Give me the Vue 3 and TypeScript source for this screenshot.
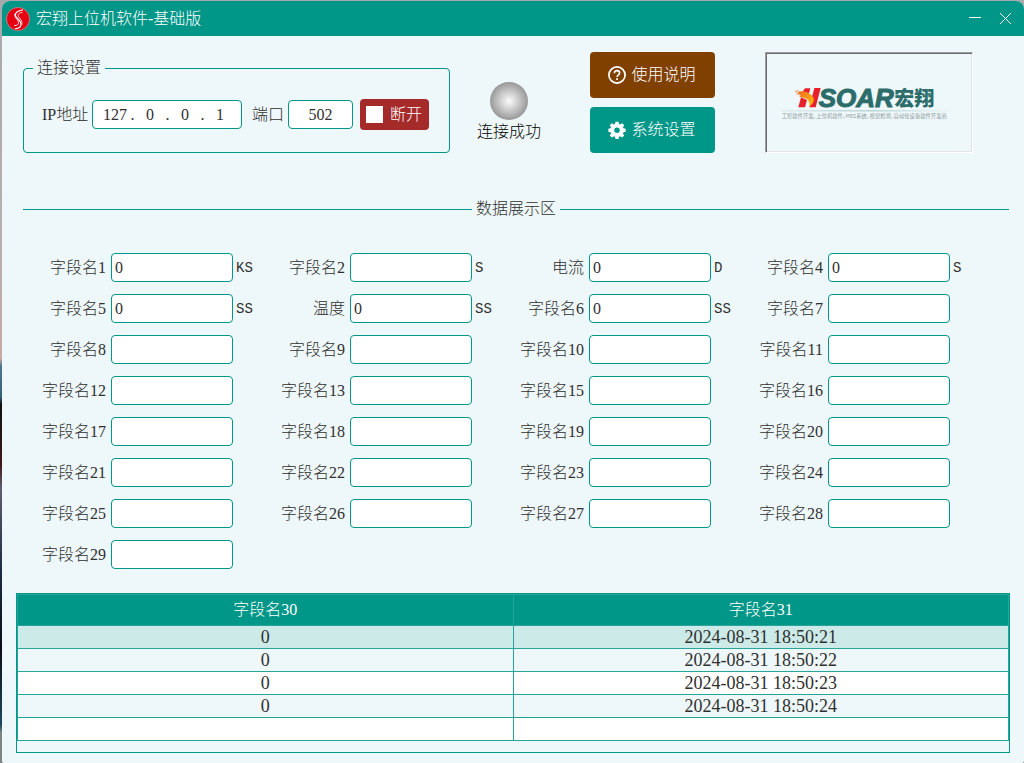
<script setup lang="ts">
import { reactive, ref } from 'vue'

interface Field {
  name: string
  value: string
  unit: string
}

interface LogRow {
  value: string
  time: string
}

const ip = reactive<string[]>(['127', '0', '0', '1'])
const port = ref('502')

const preset: Record<number, Partial<Field>> = {
  1: { value: '0', unit: 'KS' },
  2: { unit: 'S' },
  4: { value: '0', unit: 'S' },
  5: { value: '0', unit: 'SS' },
  6: { value: '0', unit: 'SS' },
}

function field(n: number): Field {
  return { name: `字段名${n}`, value: '', unit: '', ...preset[n] }
}

const fields = reactive<Field[]>([
  field(1),
  field(2),
  { name: '电流', value: '0', unit: 'D' },
  field(4),
  field(5),
  { name: '温度', value: '0', unit: 'SS' },
  ...[6, 7, 8, 9, 10, 11, 12, 13, 15, 16, 17, 18, 19, 20].map(field),
  ...[21, 22, 23, 24, 25, 26, 27, 28, 29].map(field),
])

const rows: LogRow[] = [
  { value: '0', time: '2024-08-31 18:50:21' },
  { value: '0', time: '2024-08-31 18:50:22' },
  { value: '0', time: '2024-08-31 18:50:23' },
  { value: '0', time: '2024-08-31 18:50:24' },
  { value: '', time: '' },
]
const selected = ref(0)
</script>

<template>
  <div class="desktop">
    <main class="window">
      <header class="titlebar">
        <svg class="app-icon" viewBox="0 0 48 48" aria-hidden="true">
          <circle cx="24" cy="24" r="23" fill="#e60012" stroke="#f3b9bd" stroke-width="1" />
          <g fill="none" stroke="#fff" stroke-linecap="round">
            <path d="M33 6C24 7 17 12 19 18c2 5 11 8 11 16 0 5-4 9-11 9" stroke-width="2.500" />
            <path d="M32 11c-6 0-9 4-7 8 3 5 8 8 7 15M18 14c-3 7 7 11 7 18 0 3-3 6-8 5" stroke-width="1.600" />
          </g>
        </svg>
        <h1 class="title">宏翔上位机软件-基础版</h1>
        <button class="win-btn" type="button" aria-label="最小化">
          <svg viewBox="0 0 13 13"><path d="M0 5.500H12" /></svg>
        </button>
        <button class="win-btn" type="button" aria-label="关闭">
          <svg viewBox="0 0 13 13"><path d="M1 1L12 12M12 1L1 12" /></svg>
        </button>
      </header>

      <section class="toolbar">
        <fieldset class="connection">
          <legend>连接设置</legend>
          <div class="connection-row">
            <label class="ip-label" for="ip-0">IP地址</label>
            <div class="ip-box">
              <template v-for="(_, i) in ip" :key="i">
                <span v-if="i > 0" class="dot">.</span>
                <input :id="`ip-${i}`" v-model="ip[i]" type="text" :aria-label="`IP地址 ${i + 1}`" />
              </template>
            </div>
            <label class="port-label" for="port">端口</label>
            <input id="port" v-model="port" class="box port" type="text" />
            <button class="stop" type="button"><span class="stop-mark"></span>断开</button>
          </div>
        </fieldset>

        <div class="status">
          <span class="lamp"></span>
          <span>连接成功</span>
        </div>

        <div class="actions">
          <button class="action help" type="button">
            <svg viewBox="0 0 24 24" aria-hidden="true">
              <circle cx="12" cy="12" r="10.800" fill="none" stroke="#fff" stroke-width="2.300" />
              <path d="M8.500 9.600C8.500 7.400 10 6.200 12 6.200s3.500 1.300 3.500 3.200c0 2.400-3.400 2.700-3.400 5.400" fill="none" stroke="#fff" stroke-width="2.200" />
              <rect x="10.900" y="16.200" width="2.400" height="2.400" fill="#fff" />
            </svg>
            使用说明
          </button>
          <button class="action settings" type="button">
            <svg viewBox="-1 1 26 26" aria-hidden="true">
              <path
                fill="#fff"
                fill-rule="evenodd"
                d="M9.800 2h4.400l.7 3.200 1.600.7 2.800-1.800 3.100 3.100-1.800 2.800.7 1.600 3.200.7v4.400l-3.200.7-.7 1.600 1.800 2.800-3.100 3.100-2.800-1.800-1.600.7-.7 3.200H9.800l-.7-3.200-1.600-.7-2.800 1.800-3.100-3.100 1.800-2.800-.7-1.600-3.200-.7v-4.400l3.200-.7.7-1.600-1.800-2.800 3.100-3.100 2.800 1.800 1.600-.7zM12 10.500a4 4 0 1 0 0 8 4 4 0 0 0 0-8z"
              />
            </svg>
            系统设置
          </button>
        </div>

        <div class="brand">
          <svg class="brand-logo" viewBox="0 0 540 135" role="img" aria-label="HSOAR宏翔">
            <defs>
              <linearGradient id="flame" x1="0" y1="0" x2="1" y2="1">
                <stop offset="0" stop-color="#ef6a1f" />
                <stop offset="1" stop-color="#ffc20e" />
              </linearGradient>
              <linearGradient id="rule" x1="0" y1="0" x2="1" y2="0">
                <stop offset="0" stop-color="#9fc4c4" stop-opacity="0.300" />
                <stop offset="0.500" stop-color="#9fc4c4" />
                <stop offset="1" stop-color="#9fc4c4" stop-opacity="0" />
              </linearGradient>
            </defs>
            <path d="M78 25H94L90 40 70 36zM66 52l18 8-6 22H58z" fill="#e8202c" />
            <path d="M106 24H125L110 82H91z" fill="#e8202c" />
            <path d="M56 36C72 28 100 40 104 55c2 12-5 18-13 25 2-15-3-24-17-27-7 0-12-3-14-6l7-1c-5-1-10-4-11-10z" fill="url(#flame)" />
            <path d="M48 33h5v4h-5zM53 40h4v4h-4zM54 30h4v4h-4z" fill="#f08a4b" />
            <text class="brand-latin" x="119" y="80">SOAR</text>
            <text class="brand-cjk" x="346" y="77">宏翔</text>
            <rect x="8" y="91" width="522" height="3" fill="url(#rule)" />
            <text class="brand-tag" x="8" y="115">工控软件开发, 上位机软件, MES系统, 视觉检测, 自动化设备软件开发商</text>
          </svg>
        </div>
      </section>

      <h2 class="divider">数据展示区</h2>

      <section class="fields">
        <div v-for="(f, i) in fields" :key="i" class="field">
          <label :for="`field-${i}`">{{ f.name }}</label>
          <input :id="`field-${i}`" v-model="f.value" class="box" type="text" />
          <span class="unit">{{ f.unit }}</span>
        </div>
      </section>

      <div class="table-frame">
        <table>
          <thead>
            <tr>
              <th scope="col">字段名30</th>
              <th scope="col">字段名31</th>
            </tr>
          </thead>
          <tbody>
            <tr v-for="(r, i) in rows" :key="i" :class="{ selected: i === selected }" @click="selected = i">
              <td>{{ r.value }}</td>
              <td>{{ r.time }}</td>
            </tr>
          </tbody>
        </table>
      </div>
    </main>
  </div>
</template>

<style>
body {
  margin: 0;
}
</style>

<style scoped>
* {
  box-sizing: border-box;
}

.desktop {
  min-height: 100vh;
  padding: 1px 0 0 2px;
  display: flex;
  background: linear-gradient(#a8a8ac 0%, #b9adb0 30%, #c9a8a5 47%, #4d7690 48%, #35607c 52%, #111 53%, #42181a 61%, #5f5e70 64%, #1c2c48 75%, #0b0e14 85%, #1d4a60 95%, #7c8583 96%);
  color: #303030;
  font-family: "Liberation Serif", "Noto Sans CJK SC", serif;
  font-size: 16px;
  font-weight: 300;
  line-height: 20px;
}

.window {
  flex: 1;
  min-width: 0;
  padding-bottom: 10px;
  border-radius: 8px 8px 2px 2px;
  background: #eef7f9;
  overflow: hidden;
}

button,
input {
  font: inherit;
  color: inherit;
}

button {
  border: 0;
  padding: 0;
  cursor: pointer;
}

.titlebar {
  display: flex;
  align-items: center;
  height: 35px;
  padding: 0 4px;
  background: #009688;
  color: #fff;
}

.app-icon {
  width: 24px;
  height: 24px;
}

.title {
  flex: 1;
  margin: 0 0 0 6px;
  font-size: inherit;
  font-weight: inherit;
}

.win-btn {
  display: grid;
  place-items: center;
  width: 30px;
  height: 30px;
  background: none;
}

.win-btn svg {
  width: 13px;
  height: 13px;
  fill: none;
  stroke: #fff;
  stroke-width: 1;
}

.toolbar {
  display: flex;
  align-items: stretch;
  padding: 16px 15px 0 21px;
}

.connection {
  margin: 6px 0 0;
  padding: 21px 20px 22px 18px;
  border: 1px solid #009688;
  border-radius: 4px;
}

.connection legend {
  margin-left: -9px;
  padding: 0 4px;
}

.connection-row {
  display: flex;
  align-items: center;
}

.ip-label {
  width: 50px;
}

.port-label {
  margin: 0 4px 0 10px;
}

.ip-box,
.box {
  height: 29px;
  border: 1px solid #009688;
  border-radius: 4px;
  background: #fff;
}

.ip-box {
  display: flex;
  align-items: center;
  width: 150px;
  padding-left: 10px;
}

.ip-box input {
  width: 24px;
  padding: 0;
  border: 0;
  background: none;
  text-align: center;
  outline: none;
}

.dot {
  width: 11px;
  text-align: center;
}

.box {
  min-width: 0;
  padding: 0 3px;
  outline: none;
}

.port {
  width: 65px;
  text-align: center;
}

.stop {
  display: flex;
  align-items: center;
  gap: 7px;
  height: 31px;
  margin-left: 7px;
  padding: 0 7px 0 6px;
  border-radius: 4px;
  background: #a52a2a;
  color: #fff;
}

.stop-mark {
  width: 17px;
  height: 17px;
  background: #fff;
}

.status {
  display: flex;
  flex-direction: column;
  align-items: center;
  justify-content: flex-end;
  gap: 2px;
  margin-left: 27px;
  padding-bottom: 11px;
  color: #000;
}

.lamp {
  width: 38px;
  height: 38px;
  border-radius: 50%;
  background: radial-gradient(circle closest-side, #fbfbfb, #cfcfcf 45%, #989898 100%);
}

.actions {
  display: flex;
  flex-direction: column;
  gap: 9px;
  margin-left: 49px;
}

.action {
  display: flex;
  align-items: center;
  justify-content: center;
  gap: 6px;
  width: 125px;
  height: 46px;
  padding-right: 2px;
  border-radius: 4px;
  color: #fff;
}

.action svg {
  width: 18px;
  height: 18px;
}

.help {
  background: #804000;
}

.settings {
  background: #009688;
}

.brand {
  display: grid;
  place-items: center;
  width: 208px;
  margin-left: 50px;
  border: 1px solid;
  border-color: #a0a0a0 #fff #fff #a0a0a0;
  box-shadow: inset 1px 1px #696969, inset -1px -1px #e3e3e3;
}

.brand-logo {
  width: 180px;
  height: 45px;
}

.brand-latin {
  fill: #2c6c6a;
  stroke: #2c6c6a;
  stroke-width: 3px;
  font: italic 700 78px "Liberation Sans", sans-serif;
}

.brand-cjk {
  fill: #2c6c6a;
  font: 900 60px "Noto Sans CJK SC", sans-serif;
}

.brand-tag {
  fill: #8f9b9e;
  font: 400 16px "Noto Sans CJK SC", sans-serif;
}

.divider {
  display: flex;
  align-items: center;
  gap: 4px;
  margin: 46px 15px 0 21px;
  font-size: inherit;
  font-weight: inherit;
}

.divider::before,
.divider::after {
  content: "";
  flex: 1;
  height: 1px;
  background: #009688;
}

.fields {
  display: grid;
  grid-template-columns: repeat(4, minmax(0, 1fr));
  row-gap: 12px;
  margin: 34px 45px 0 21px;
}

.field {
  display: flex;
  align-items: center;
}

.field label {
  flex: none;
  width: 83px;
  margin-right: 5px;
  text-align: right;
}

.field .box {
  flex: 1;
}

.unit {
  flex: none;
  width: 26px;
  margin-left: 3px;
  font-family: "Liberation Mono", monospace;
  font-size: 14px;
}

.table-frame {
  margin: 24px 14px 0;
  padding-bottom: 11px;
  border: 1px solid #009688;
}

table {
  width: 100%;
  border-collapse: collapse;
  table-layout: fixed;
}

th,
td {
  height: 23px;
  padding: 0;
  border: 1px solid #26a69a;
  text-align: center;
}

th {
  height: 31px;
  background: #009688;
  color: #fff;
  font-weight: inherit;
}

td {
  background: #fff;
  font-size: 18px;
}

tbody tr:nth-child(even) td {
  background: #eef7f9;
}

tbody tr.selected td {
  background: #cceae7;
}
</style>
